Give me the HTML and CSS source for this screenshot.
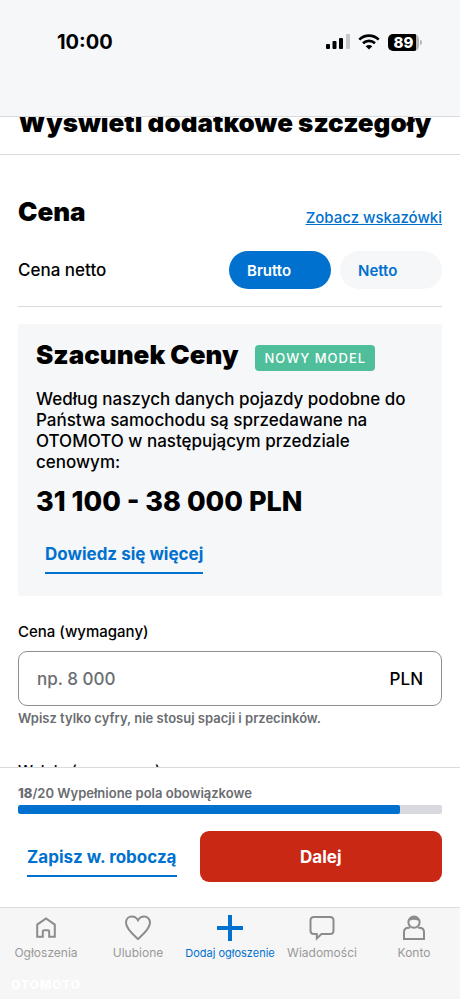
FILE: index.html
```html
<!DOCTYPE html>
<html lang="pl">
<head>
<meta charset="utf-8">
<meta name="viewport" content="width=device-width, initial-scale=1">
<title>Dodaj ogłoszenie</title>
<link rel="stylesheet" href="styles.css">
</head>
<body>
<header class="status">
  <time class="clock">10:00</time>
  <div class="indicators">
    <svg width="24" height="16" viewBox="0 0 24 16" aria-hidden="true">
      <rect x="0" y="10" width="4" height="5" rx="1"/>
      <rect x="6.500" y="7" width="4" height="8" rx="1"/>
      <rect x="13" y="4" width="4" height="11" rx="1"/>
      <rect x="20" y="0" width="4" height="15" rx="1" fill="#c5c6c8"/>
    </svg>
    <svg width="22" height="16" viewBox="0 0 22 16" fill="none" stroke="#000" stroke-width="2.600" aria-hidden="true">
      <path d="M1.300 5.600C6.700.3 15.300.3 20.700 5.600"/>
      <path d="M5 9.300c3.400-3.200 8.600-3.200 12 0"/>
      <path d="M7.700 12.200c1.900-1.700 4.700-1.700 6.600 0L11 15.600z" fill="#000" stroke="none"/>
    </svg>
    <span class="battery"><span class="level">89</span><span class="cap"></span></span>
  </div>
</header>

<main class="content">
  <h2 class="heading details">Wyświetl dodatkowe szczegóły</h2>
  <section class="price">
    <div class="row title-row">
      <h2 class="heading">Cena</h2>
      <a class="tips" href="#tips">Zobacz wskazówki</a>
    </div>
    <div class="row kind-row">
      <span class="kind-label">Cena netto</span>
      <div class="pills">
        <button class="pill active" type="button">Brutto</button>
        <button class="pill" type="button">Netto</button>
      </div>
    </div>
    <article class="estimate">
      <div class="estimate-title">
        <h3 class="heading">Szacunek Ceny</h3>
        <span class="tag">NOWY MODEL</span>
      </div>
      <p class="estimate-text">Według naszych danych pojazdy podobne do Państwa samochodu są sprzedawane na OTOMOTO w następującym przedziale cenowym:</p>
      <p class="heading range">31 100 - 38 000 PLN</p>
      <a class="text-link more" href="#more">Dowiedz się więcej</a>
    </article>
    <label class="field-label" for="amount">Cena (wymagany)</label>
    <div class="field">
      <input id="amount" type="text" inputmode="numeric" placeholder="np. 8 000">
      <span>PLN</span>
    </div>
    <p class="hint">Wpisz tylko cyfry, nie stosuj spacji i przecinków.</p>
    <p class="field-label next">Waluta (wymagany)</p>
  </section>
</main>

<section class="actions">
  <p class="count" id="count"><b>18</b>/20 Wypełnione pola obowiązkowe</p>
  <div class="track" role="progressbar" aria-labelledby="count" aria-valuenow="18" aria-valuemin="0" aria-valuemax="20"><div class="fill" style="width:90%"></div></div>
  <div class="buttons">
    <button class="text-link draft" type="button">Zapisz w. roboczą</button>
    <button class="submit" type="button">Dalej</button>
  </div>
</section>

<nav class="tabs">
  <a href="#ads"><svg width="28" height="28" viewBox="0 0 28 28"><path d="M5.200 22.800V10.600L14 4.400l8.800 6.200v12.200h-5.600v-5.200q0-1.400-1.400-1.400h-3.600q-1.400 0-1.400 1.400v5.200z"/></svg>Ogłoszenia</a>
  <a href="#favourites"><svg width="28" height="28" viewBox="0 0 28 28"><path d="M14 25C9.500 20.800 2 14.800 2 8.700 2 5 4.600 2.500 7.900 2.500c2.600 0 4.700 1.400 6.100 3.800 1.400-2.400 3.500-3.800 6.100-3.800C23.400 2.500 26 5 26 8.700 26 14.800 18.500 20.800 14 25z"/></svg>Ulubione</a>
  <a class="current" href="#add"><svg width="28" height="28" viewBox="0 0 28 28"><path d="M14 1v26M1 14h26"/></svg>Dodaj ogłoszenie</a>
  <a href="#messages"><svg width="28" height="28" viewBox="0 0 28 28"><path d="M6 3h16q3.500 0 3.500 3.500v10Q25.500 20 22 20H13.500L8.800 24.500V20H6q-3.500 0-3.500-3.500v-10Q2.500 3 6 3z"/></svg>Wiadomości</a>
  <a href="#account"><svg width="28" height="28" viewBox="0 0 28 28"><circle cx="14" cy="8.200" r="5.600"/><path d="M9.800 5.500q4.200-1.600 8.400 0Q14 1.500 9.800 5.500z" fill="#8c8c8c"/><path d="M10 13.800H8.500q-4.500 0-4.500 4.500V25h20v-6.700q0-4.500-4.500-4.500H18"/></svg>Konto</a>
  <span class="brand">OTOMOTO</span>
</nav>
</body>
</html>
```
FILE: styles.css
```css
* { box-sizing: border-box; }

body {
  margin: 0;
  height: 100vh;
  display: flex;
  flex-direction: column;
  background: #fff;
  color: #000;
  font-family: Inter, "Liberation Sans", sans-serif;
  font-size: 17px;
}

h2, h3, p { margin: 0; }
button, input { font: inherit; border: 0; padding: 0; background: none; color: inherit; }
a { color: #0071ce; }

.status {
  display: flex;
  justify-content: space-between;
  align-items: flex-start;
  padding: 30px 38px 62px 57px;
  background: #f6f7f9;
  border-bottom: 1px solid #d8dadd;
}
.clock { font-size: 20px; line-height: 24px; font-weight: 700; }
.indicators { display: flex; align-items: center; gap: 8px; height: 24px; }
.battery { display: flex; align-items: center; gap: 1px; }
.level {
  width: 31px;
  height: 17px;
  border-radius: 5px;
  background: linear-gradient(90deg, #000 28px, #b5b6b8 28px);
  color: #fff;
  font-size: 15px;
  line-height: 17px;
  font-weight: 800;
  text-align: center;
}
.cap { width: 2px; height: 5px; border-radius: 0 2px 2px 0; background: #b5b6b8; }

.content { flex: 1; min-height: 0; overflow: hidden; }
.heading { font-size: 26px; line-height: 32px; font-weight: 900; }
.details { margin-top: -10px; padding: 0 18px 15px; border-bottom: 1px solid #d8dadd; }
.price { padding: 41px 18px 0; }
.row { display: flex; justify-content: space-between; }
.title-row { align-items: flex-end; }
.tips { font-size: 15px; line-height: 20px; font-weight: 500; }
.kind-row { align-items: center; padding: 23px 0 17px; border-bottom: 1px solid #d8dadd; }
.kind-label { font-weight: 500; }
.pills { display: flex; gap: 9px; }
.pill {
  width: 102px;
  height: 38px;
  padding-left: 18px;
  border-radius: 19px;
  background: #f6f7f9;
  color: #0071ce;
  font-size: 15px;
  font-weight: 600;
  text-align: left;
}
.pill.active { background: #0071ce; color: #fff; }

.estimate { margin-top: 17px; padding: 15px 18px 22px; background: #f6f7f9; }
.estimate-title { display: flex; align-items: flex-end; gap: 17px; }
.tag {
  padding: 0 9px;
  border-radius: 4px;
  background: #4fbf9b;
  color: #fff;
  font-size: 13px;
  line-height: 26px;
  font-weight: 500;
  letter-spacing: 1px;
}
.estimate-text { margin-top: 18px; line-height: 21px; font-weight: 500; }
.range { margin: 13px 0 16px; font-size: 27px; font-weight: 800; }
.text-link {
  display: inline-block;
  padding: 8px 0 6px;
  border-bottom: 2px solid #0071ce;
  color: #0071ce;
  line-height: 24px;
  font-weight: 700;
  text-decoration: none;
}
.more { display: block; width: fit-content; margin-left: 9px; }

.field-label { display: block; margin: 26px 0 9px; font-size: 15px; line-height: 20px; font-weight: 500; }
.field {
  display: flex;
  align-items: center;
  height: 55px;
  padding: 0 18px;
  border: 1px solid #8c8f93;
  border-radius: 9px;
  font-weight: 500;
}
.field input { flex: 1; min-width: 0; outline: none; }
.field input::placeholder { color: #6a6d71; opacity: 1; }
.hint { margin-top: 4px; color: #6a6d71; font-size: 13px; line-height: 16px; font-weight: 600; }
.next { margin-top: 35px; }

.actions { padding: 15px 18px 25px; border-top: 1px solid #d8dadd; background: #fff; }
.count { color: #6a6d71; font-size: 13px; line-height: 20px; font-weight: 600; }
.count b { font-weight: 800; }
.track { height: 9px; margin: 2px 0 17px; border-radius: 2px; background: #d8dadf; overflow: hidden; }
.fill { height: 100%; border-radius: 2px; background: #0071ce; }
.buttons { display: grid; grid-template-columns: 3fr 4fr; align-items: center; }
.draft { justify-self: start; margin-left: 9px; }
.submit { height: 51px; border-radius: 9px; background: #c82814; color: #fff; font-weight: 700; }

.tabs {
  position: relative;
  display: grid;
  grid-template-columns: repeat(5, minmax(0, 1fr));
  height: 92px;
  padding-top: 6px;
  border-top: 1px solid #dcdcdc;
  background: #f6f6f6;
}
.tabs a {
  display: flex;
  flex-direction: column;
  align-items: center;
  gap: 3px;
  color: #999;
  font-size: 12px;
  line-height: 16px;
  text-decoration: none;
  white-space: nowrap;
}
.tabs svg { fill: none; stroke: #8c8c8c; stroke-width: 2; }
.tabs .current { color: #0071ce; font-size: 11px; }
.tabs .current svg { stroke: #0071ce; stroke-width: 4; }
.brand {
  position: absolute;
  left: 11px;
  bottom: 6px;
  color: #fff;
  font-size: 12px;
  line-height: 16px;
  font-weight: 800;
  letter-spacing: 1px;
}
```
